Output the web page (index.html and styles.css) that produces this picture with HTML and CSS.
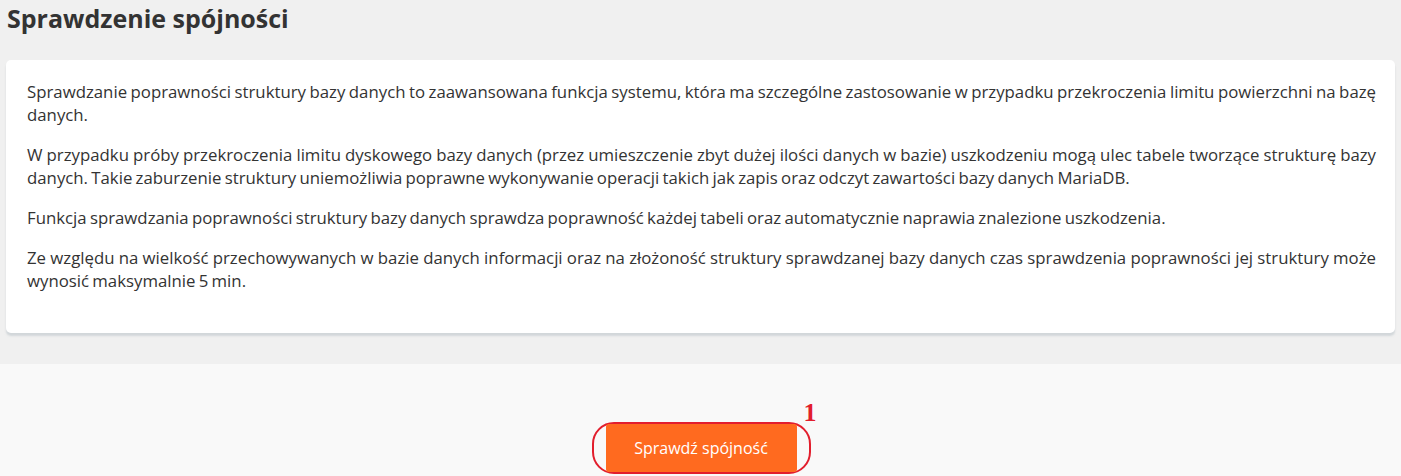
FILE: index.html
```html
<!DOCTYPE html>
<html lang="pl">
<head>
    <meta charset="UTF-8">
    <meta name="viewport" content="width=device-width, initial-scale=1.0">
    <title>Sprawdzenie spójności</title>
    <link rel="stylesheet" href="styles.css">
</head>
<body>

    <div class="top">
        <h1 class="title">Sprawdzenie spójności</h1>
        <div class="card">
            <p>Sprawdzanie poprawności struktury bazy danych to zaawansowana funkcja systemu, która ma szczególne zastosowanie w przypadku przekroczenia limitu powierzchni na bazę danych.</p>
            <p>W przypadku próby przekroczenia limitu dyskowego bazy danych (przez umieszczenie zbyt dużej ilości danych w bazie) uszkodzeniu mogą ulec tabele tworzące strukturę bazy danych. Takie zaburzenie struktury uniemożliwia poprawne wykonywanie operacji takich jak zapis oraz odczyt zawartości bazy danych MariaDB.</p>
            <p>Funkcja sprawdzania poprawności struktury bazy danych sprawdza poprawność każdej tabeli oraz automatycznie naprawia znalezione uszkodzenia.</p>
            <p>Ze względu na wielkość przechowywanych w bazie danych informacji oraz na złożoność struktury sprawdzanej bazy danych czas sprawdzenia poprawności jej struktury może wynosić maksymalnie 5 min.</p>
        </div>
    </div>

    <div class="bottom">
        <div class="marker">
            <button class="check">Sprawdź spójność</button>
            <span class="marker-num">1</span>
        </div>
    </div>

</body>
</html>
```

FILE: styles.css
```css
body {
    margin: 0;
    font-family: "Open Sans", Arial, sans-serif;
    color: #333;
    background-color: #f9f9f9;
}

.top {
    background-color: #f0f0f0;
    padding: 1px 6px 31px;
}

.title {
    font-size: 25px;
    font-weight: 700;
    margin: 1px 0 0 1px;
    line-height: 32px;
}

.card {
    margin-top: 26px;
    background-color: #fff;
    border-radius: 5px;
    padding: 20px 19px 24px 21px;
    box-shadow: 0 3px 2px rgba(190, 198, 204, 0.6);
}

.card p {
    margin: 0 0 17px;
    font-size: 16.8px;
    line-height: 23px;
    word-spacing: -1.1px;
    text-align: justify;
}

.bottom {
    display: flex;
    justify-content: center;
    padding-top: 58px;
    height: 55px;
}

.marker {
    position: relative;
    border: 2px solid #e21e2d;
    border-radius: 22px;
    padding: 0 12px;
    height: 48px;
    margin-left: 1px;
}

.check {
    height: 48px;
    width: 191px;
    padding: 0;
    border: none;
    border-radius: 3px;
    background-color: #ff6a1f;
    color: #fff;
    font-family: "Open Sans", Arial, sans-serif;
    font-size: 16px;
    cursor: pointer;
}

.marker-num {
    position: absolute;
    right: -8px;
    top: -22px;
    color: #e21e2d;
    font-family: "Liberation Serif", serif;
    font-weight: 700;
    font-size: 26px;
    line-height: 22px;
}
```
